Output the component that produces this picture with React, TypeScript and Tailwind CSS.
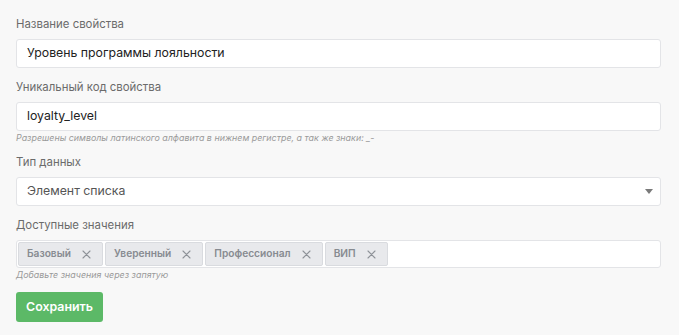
import React from "react";

const font = { fontFamily: "Inter, 'Noto Sans', sans-serif" };

const Label = ({ children }: { children: React.ReactNode }) => (
  <div className="mb-[6px] text-[11.4px] leading-[18px] text-[#6b6b6b]">{children}</div>
);

const Help = ({ children }: { children: React.ReactNode }) => (
  <div className="h-[12px] pt-[1px] text-[8.9px] italic leading-[12px] text-[#9a9a9a]">{children}</div>
);

const Tag = ({ label }: { label: string }) => (
  <div className="flex h-[24px] items-center gap-[11px] rounded-[2px] border border-[#d9dbdf] bg-[#e8e9ec] pl-[8px] pr-[11px]">
    <span className="text-[10.2px] font-semibold text-[#878b91]">{label}</span>
    <svg width="9" height="9" viewBox="0 0 9 9" className="text-[#8e9298]">
      <path d="M1 1L8 8M8 1L1 8" stroke="currentColor" strokeWidth="1.1" strokeLinecap="round" />
    </svg>
  </div>
);

export default function App() {
  const tags = ["Базовый", "Уверенный", "Профессионал", "ВИП"];

  return (
    <div style={font} className="min-h-[335px] w-[679px] bg-[#f8f8f8] pl-[16px] pr-[18px] pt-[15px]">
      <div className="mb-[10px]">
        <Label>Название свойства</Label>
        <div className="flex h-[29px] items-center rounded-[3px] border border-[#e3e4e7] bg-white pl-[10px] text-[12.3px] text-[#222]">
          Уровень программы лояльности
        </div>
      </div>

      <div className="mb-[10px]">
        <Label>Уникальный код свойства</Label>
        <div className="flex h-[29px] items-center rounded-[3px] border border-[#e3e4e7] bg-white pl-[10px] text-[12.3px] text-[#222]">
          loyalty_level
        </div>
        <Help>Разрешены символы латинского алфавита в нижнем регистре, а так же знаки: _-</Help>
      </div>

      <div className="mb-[10px]">
        <Label>Тип данных</Label>
        <div className="flex h-[29px] items-center justify-between rounded-[3px] border border-[#e3e4e7] bg-white pl-[10px] pr-[7px] text-[12.3px] text-[#555]">
          <span>Элемент списка</span>
          <svg width="8" height="5" viewBox="0 0 8 5">
            <path d="M0 0H8L4 5Z" fill="#7a7a7a" />
          </svg>
        </div>
      </div>

      <div className="mb-[12px]">
        <Label>Доступные значения</Label>
        <div className="flex h-[28px] items-center gap-[2px] rounded-[3px] border border-[#e3e4e7] bg-white px-[1px]">
          {tags.map((t) => (
            <Tag key={t} label={t} />
          ))}
        </div>
        <Help>Добавьте значения через запятую</Help>
      </div>

      <button className="h-[30px] rounded-[3px] bg-[#5cb967] px-[10px] text-[12.4px] font-semibold text-white">
        Сохранить
      </button>
    </div>
  );
}
